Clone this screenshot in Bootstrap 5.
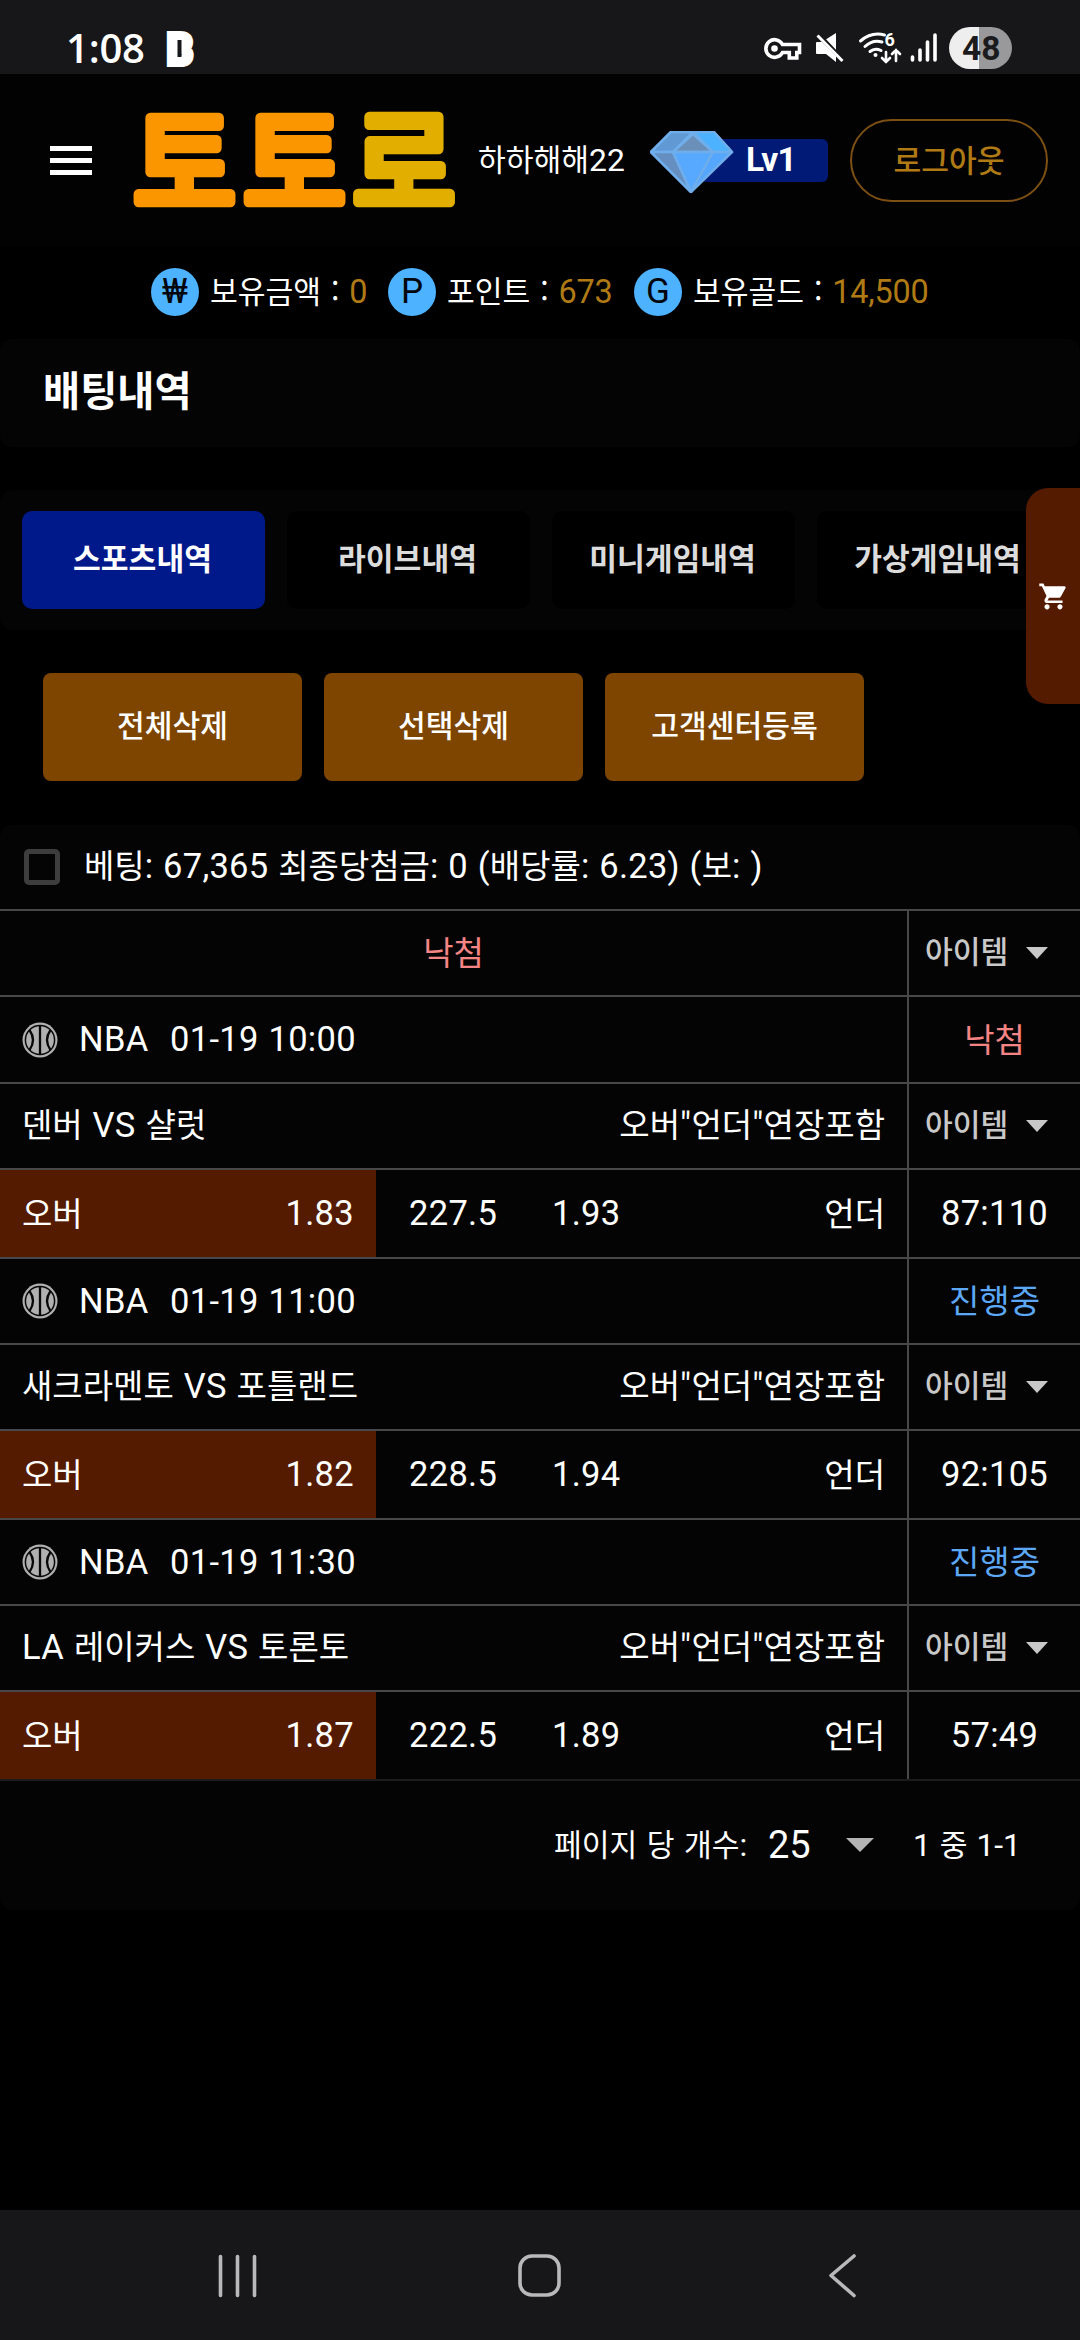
<!DOCTYPE html>
<html lang="ko">
<head>
<meta charset="utf-8">
<meta name="viewport" content="width=device-width, initial-scale=1">
<title>배팅내역</title>
<link href="https://cdn.jsdelivr.net/npm/bootstrap@5.3.0/dist/css/bootstrap.min.css" rel="stylesheet">
<style>
body{background:#000;color:#fff;font-family:Roboto,"Noto Sans CJK KR",sans-serif;font-size:34.5px;line-height:1;overflow:hidden;width:1080px;height:2340px}
.ko{font-family:"Noto Sans CJK KR",sans-serif;font-size:33px;letter-spacing:0}
.sysbar{height:74px;background:#171719;padding:22px 68px 0 66px}
.clock{font-family:"Open Sans",sans-serif;font-weight:600;font-size:40px;letter-spacing:-.2px;line-height:52px;width:78px}
.appmark{margin:8px 0 0 22px;overflow:visible}
.sysicons{margin-top:4px;overflow:visible}
.topbar{height:172px;background:#020202;padding:0 32px 0 50px}
.brandmark{margin-left:40px;overflow:visible}
.member{font-size:31.8px;margin-left:22px;width:172px}
.member .ko,.wallet .ko{font-size:30.2px}
.wallet{height:93px;font-size:32.4px;padding:0 0 2px 151px;letter-spacing:-.2px;word-spacing:1.4px}
.purse{margin-left:11px}
.amt{color:#b07a15}
.coin{width:48px;height:48px;background:#4db2ff;color:#02060c;font-size:35px;line-height:48px;text-align:center;letter-spacing:0;flex:none}
.lvl{width:178px;height:62px}
.lvtag{position:absolute;left:50px;top:10px;width:128px;height:43px;border-radius:6px;background:#001a76;font-weight:700;font-size:33.5px;line-height:42px;padding-left:46px;letter-spacing:-.7px}
.gem{position:absolute;left:0;top:2px}
.logout{width:198px;height:83px;border:2px solid #7c5012;border-radius:42px;color:#b07a15;font-weight:500;font-size:30.2px;padding:0}
.panel{background:#040404;border-radius:12px}
.pagehead{height:108px;padding:0 0 0 43px;font-size:40.4px;font-weight:700}
.tabs{height:140px;margin-top:43px;padding:21px 0 0 22px;gap:22px;overflow:hidden}
.tabbtn{width:243px;height:98px;border-radius:10px;background:#000;color:#dcdcdc;font-size:30.2px;font-weight:700;flex:none;padding:0 2px 0 0}
.tabbtn.on{background:#00198a;color:#fff}
.cart{position:absolute;right:0;top:488px;width:54px;height:216px;border-radius:22px 0 0 22px;background:#551b00}
.acts{margin-top:43px;padding-left:43px;gap:22px}
.act{width:259px;height:108px;border-radius:8px;background:#7d4500;color:#fff;font-size:30.2px;font-weight:500}
.bets{margin-top:44px;height:1085px}
.slip{height:84px;padding:0 0 2px 24px;letter-spacing:.27px;word-spacing:.9px}
.tick{width:36px;height:36px;border:5px solid #3d3d3d;border-radius:5px;margin-right:24px;position:relative;top:1px}
.rw{border-top:2px solid #484848;height:86px;letter-spacing:.3px;word-spacing:1px}
.r87{height:87px}.r89{height:89px}
.mainc{width:907px;padding:0 22px;flex:none}
.sidec{width:173px;border-left:2px solid #484848;flex:none}
.lose,.live,.item{padding-bottom:3px}
.lose{color:#f58484}.live{color:#5ca8f7}
.item{color:#c8c8c8}
.item .ko{font-size:30.2px;font-weight:500}
.item svg{position:relative;top:1px}
.match{padding-bottom:2px}
.pick{width:376px;background:#551b00;padding:0 22px;flex:none}
.pager{border-top:2px solid #1c1c1c;height:131px;padding:0 0 2px 554px;font-size:31.8px;word-spacing:1px}
.pager .ko{font-size:30.2px}
.navkeys{position:absolute;left:0;bottom:0;width:1080px;height:130px;background:#171719}
</style>
</head>
<body class="position-relative">
<svg width="0" height="0" class="position-absolute"><defs>
<g id="ball"><circle cx="18" cy="18" r="17.500" fill="#b0b0b0"/><circle cx="18" cy="18" r="14.600" fill="none" stroke="#0a0a0a" stroke-width="1.500"/><path d="M18 3.500v29M7.500 8Q14.500 18 7.500 28M28.500 8Q21.500 18 28.500 28" fill="none" stroke="#080808" stroke-width="2.300"/></g>
</defs></svg>

<header class="sysbar d-flex">
  <span class="clock">1:08</span>
  <svg class="appmark" width="27" height="37" viewBox="0 0 27 37"><text x="1.500" y="34" font-family="Roboto" font-weight="900" font-size="43" textLength="25" lengthAdjust="spacingAndGlyphs" fill="#fff" stroke="#fff" stroke-width="6">B</text><rect x="11.500" y="10" width="4" height="17" fill="#171719"/></svg>
  <svg class="sysicons ms-auto" width="249" height="44" viewBox="763 26 249 44">
    <path d="M782.500 44.500a8.800 8.800 0 1 0 0 8h6.800v5.500h7.500v-5.500h2.700v-8z" fill="none" stroke="#fff" stroke-width="3.600"/><circle cx="774.500" cy="48.500" r="3.300" fill="#fff"/>
    <path fill="#fff" d="M816 43q0-1 1-1h5l14 14v6l-10-8h-9q-1 0-1-1zM825 40l11-7v18z"/><path d="M819.500 34L844 60" stroke="#171719" stroke-width="2.500"/><path d="M817.500 35.500L842.500 61" stroke="#fff" stroke-width="3"/>
    <g fill="none" stroke="#fff" stroke-width="3" stroke-linecap="round"><path d="M860.500 41q11-9.500 24-6M865 46.500q8-7.500 17-4.500M870 51.500q5-4 11-1"/><path d="M886 52v10M882 58l4 4 4-4M896 61V50M892 54l4-4 4 4" stroke-width="2.600"/></g><circle cx="875.500" cy="55" r="2" fill="#fff"/><text x="884.500" y="46" font-family="Roboto" font-weight="700" font-size="18" fill="#fff">6</text>
    <g stroke="#fff" stroke-width="3.600" stroke-linecap="round"><path d="M912.500 57v3M920 50v10M927.500 42v18M935 35v25"/></g>
    <path fill="#eee" d="M979 27h-9a21 21 0 0 0 0 42h9z"/><path fill="#99999b" d="M979 27h12a21 21 0 0 1 0 42h-12z"/><text x="962" y="59.500" font-family="Roboto" font-weight="700" font-size="33.500" textLength="38.500" fill="#1b1b1d">48</text>
  </svg>
</header>

<nav class="topbar d-flex align-items-center">
  <svg width="42" height="29" viewBox="0 0 42 29" fill="#fff"><path d="M0 0h42v5H0zM0 12h42v5H0zM0 24h42v5H0z"/></svg>
  <svg class="brandmark" width="324" height="100" viewBox="0 0 324 100" font-family="'Noto Sans CJK KR'" font-weight="400" font-size="112" stroke-width="10" stroke-linejoin="round" stroke-linecap="round"><g transform="translate(1 2) scale(1 1.04)"><text x="0" y="90" fill="#fb9500" stroke="#fb9500">토</text><text x="110" y="90" fill="#fb9500" stroke="#fb9500">토</text><text x="219.500" y="90" fill="#e2ae00" stroke="#e2ae00">로</text></g></svg>
  <span class="member"><span class="ko">하하해해</span>22</span>
  <div class="lvl position-relative"><span class="lvtag">Lv1</span>
    <svg class="gem" width="84" height="62" viewBox="0 0 84 62" stroke="#6faeea" stroke-width="2.500" stroke-linejoin="round"><path d="M21 1h43l18 20-41 40L1 21z" fill="#54a6ff"/><path d="M21 1h22L23 21H1z" fill="#6199d4"/><path d="M43 1h21l18 20H63z" fill="#4cb2ff"/><path d="M43 3l20 18H23z" fill="#6a8fb8"/><path d="M1 21h22l18 40z" fill="#648fc0"/><path d="M63 21L41 61 23 21z" fill="#57a8ff"/></svg>
  </div>
  <button class="btn logout ko ms-auto">로그아웃</button>
</nav>

<div class="wallet d-flex align-items-center">
  <span class="coin rounded-circle">₩</span><span class="purse" style="width:178px"><span class="ko">보유금액 : </span><span class="amt">0</span></span>
  <span class="coin rounded-circle">P</span><span class="purse" style="width:187px"><span class="ko">포인트 : </span><span class="amt">673</span></span>
  <span class="coin rounded-circle">G</span><span class="purse"><span class="ko">보유골드 : </span><span class="amt">14,500</span></span>
</div>

<h1 class="panel pagehead d-flex align-items-center m-0">배팅내역</h1>

<div class="panel tabs d-flex">
  <button class="btn tabbtn on">스포츠내역</button>
  <button class="btn tabbtn">라이브내역</button>
  <button class="btn tabbtn">미니게임내역</button>
  <button class="btn tabbtn">가상게임내역</button>
</div>

<div class="acts d-flex">
  <button class="btn act">전체삭제</button><button class="btn act">선택삭제</button><button class="btn act">고객센터등록</button>
</div>

<section class="panel bets">
  <div class="slip d-flex align-items-center"><span class="tick"></span><span><span class="ko">베팅</span>: 67,365 <span class="ko">최종당첨금</span>: 0 (<span class="ko">배당률</span>: 6.23) (<span class="ko">보</span>: )</span></div>
  <div id="rows"></div>
  <div class="pager d-flex align-items-center">
    <span style="width:214px"><span class="ko">페이지 당 개수</span>:</span><span style="font-size:38px;width:78px">25</span>
    <svg width="28" height="14" viewBox="0 0 28 14"><path d="M0 0h28L14 14z" fill="#b3b3b3"/></svg>
    <span style="margin-left:39px">1 <span class="ko">중</span> 1-1</span>
  </div>
</section>

<button class="btn cart d-flex align-items-center p-0"><svg width="31" height="31" viewBox="0 0 24 24" fill="#fff" style="margin-left:11px"><path d="M7 18c-1.100 0-2 .9-2 2s.9 2 2 2 2-.9 2-2-.9-2-2-2zM1 2v2h2l3.600 7.600-1.350 2.450C4.520 15.370 5.480 17 7 17h12v-2H7.400l1.150-2h7.450c.75 0 1.410-.41 1.750-1.030l3.580-6.490C21.700 4.820 21.220 4 20.460 4H5.210l-.94-2H1zm16 16c-1.100 0-2 .9-2 2s.9 2 2 2 2-.9 2-2-.9-2-2-2z"/></svg></button>

<footer class="navkeys">
  <svg width="1080" height="130" viewBox="0 0 1080 130" fill="none" stroke="#b9b9bb" stroke-width="3.600" stroke-linecap="round" stroke-linejoin="round"><path d="M220.500 46.500v39M237.500 46.500v39M254.500 46.500v39M854 46L831 65.500 854 85.500"/><rect x="520" y="46" width="39" height="39" rx="12"/></svg>
</footer>

<script>
const ko = s => s.replace(/[가-힣]+/g, m => `<span class="ko">${m}</span>`);
const item = `<div class="sidec item d-flex align-items-center"><span style="margin-left:16px;width:101px">${ko('아이템')}</span><svg width="22" height="12" viewBox="0 0 22 12"><path d="M0 0h22L11 12z" fill="#c8c8c8"/></svg></div>`;
const side = (t, c) => `<div class="sidec d-flex align-items-center justify-content-center ${c}">${ko(t)}</div>`;
const games = [
  ['10:00','낙첨','lose','덴버 VS 샬럿','1.83','227.5','1.93','87:110'],
  ['11:00','진행중','live','새크라멘토 VS 포틀랜드','1.82','228.5','1.94','92:105'],
  ['11:30','진행중','live','LA 레이커스 VS 토론토','1.87','222.5','1.89','57:49']];
document.getElementById('rows').innerHTML =
  `<div class="rw d-flex"><div class="mainc lose d-flex align-items-center justify-content-center">${ko('낙첨')}</div>${item}</div>` +
  games.map((g, i) => `
  <div class="rw d-flex ${i ? '' : 'r87'}"><div class="mainc d-flex align-items-center"><svg width="36" height="36"><use href="#ball"/></svg><span style="margin-left:21px;width:91px">NBA</span><span>01-19 ${g[0]}</span></div>${side(g[1], g[2])}</div>
  <div class="rw d-flex"><div class="mainc match d-flex align-items-center justify-content-between"><span>${ko(g[3])}</span><span>${ko('오버"언더"연장포함')}</span></div>${item}</div>
  <div class="rw r89 d-flex"><div class="mainc p-0 d-flex"><div class="pick d-flex align-items-center justify-content-between"><span>${ko('오버')}</span><span>${g[4]}</span></div><div class="flex-grow-1 d-flex align-items-center" style="padding:0 22px 0 33px"><span style="width:143px">${g[5]}</span><span>${g[6]}</span><span class="ms-auto">${ko('언더')}</span></div></div>${side(g[7], '')}</div>`).join('');
</script>
<script src="https://cdn.jsdelivr.net/npm/bootstrap@5.3.0/dist/js/bootstrap.bundle.min.js"></script>
</body>
</html>
